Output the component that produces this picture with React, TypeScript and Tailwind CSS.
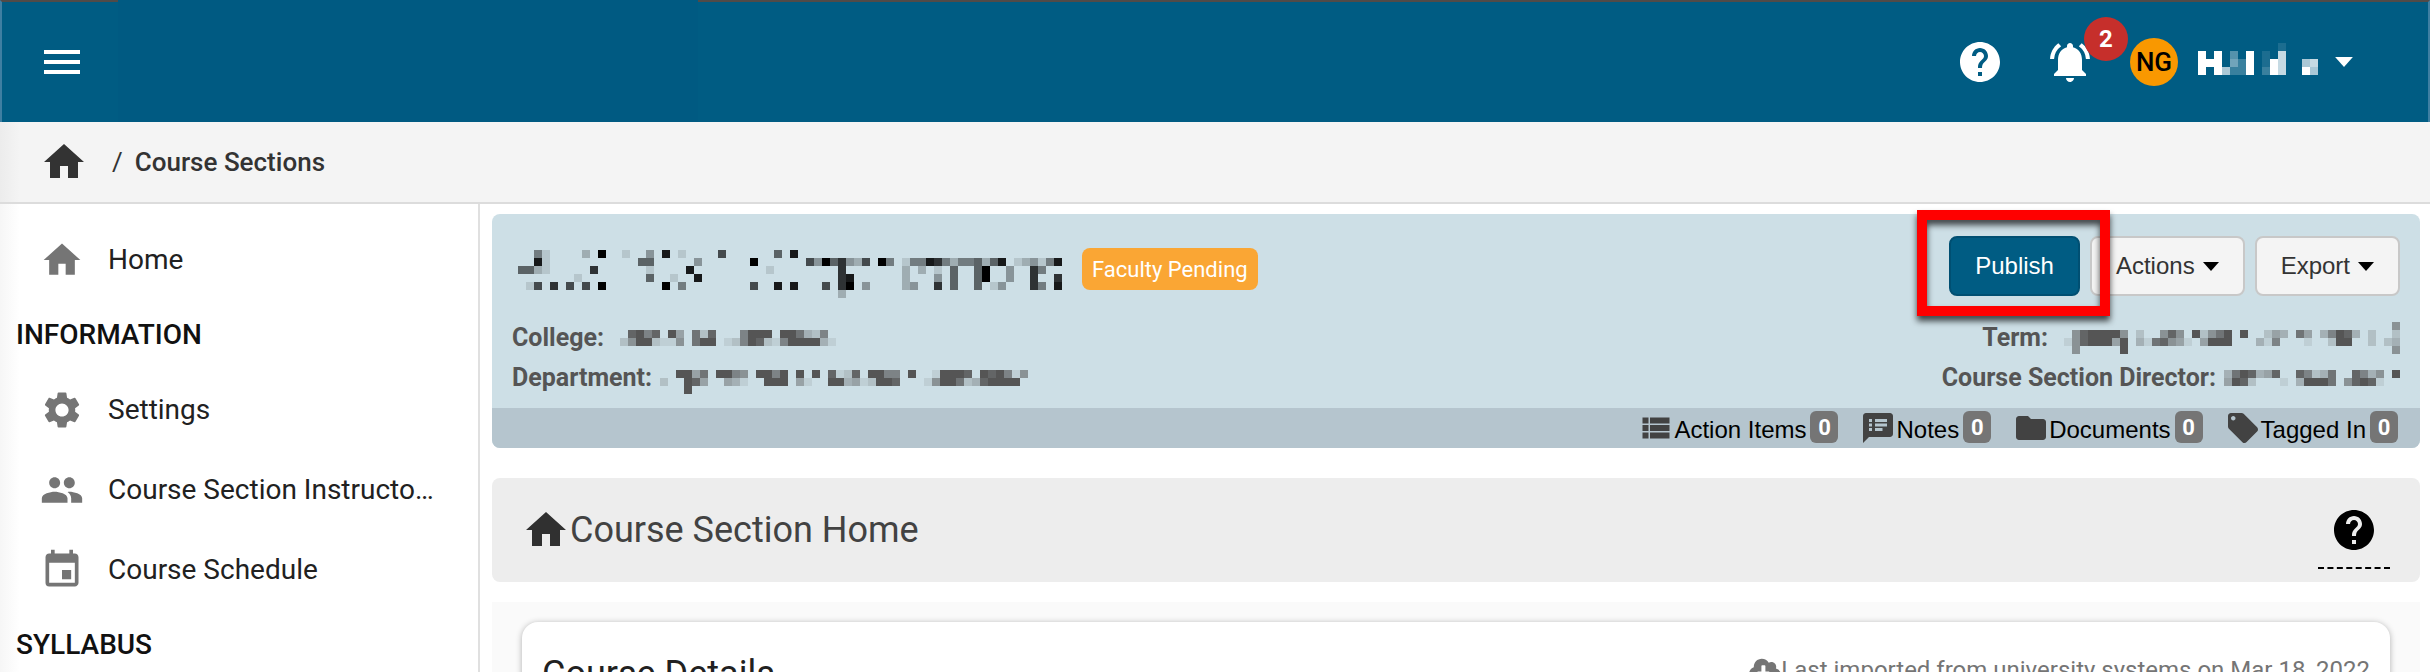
import type { ReactNode } from 'react';
import type { IconType } from 'react-icons';
import { FaCloudDownloadAlt } from 'react-icons/fa';
import {
  MdEvent,
  MdFolder,
  MdHelp,
  MdHome,
  MdLocalOffer,
  MdMenu,
  MdNotificationsActive,
  MdPeople,
  MdSettings,
  MdSpeakerNotes,
  MdViewList,
} from 'react-icons/md';

// Each row lists its filled cells as "column:strength", strength 1-9.
const userName = [
  '10:1',
  '0:9 2:9 4:3 6:9 8:1 10:7',
  '0:9 1:9 2:9 4:4 5:2 6:9 8:1 9:9 10:7 13:6 14:7',
  '0:9 2:9 3:6 4:2 5:2 6:9 8:2 9:9 10:7 13:9 14:6',
];

const courseTitle = [
  '2:4 3:1 8:2 10:9 13:1 16:3 18:8 20:1 25:6 32:5 34:8',
  '2:8 3:1 15:5 16:5 22:3 29:9 36:6 37:3 38:9 39:5 40:7 41:3 42:2 43:6 45:9 46:4 48:1 49:4 50:4 51:8 52:7 53:4 54:2 55:4 56:4 57:5 58:2 59:5 60:8 62:1 63:2 64:3 65:1 66:4 67:8',
  '0:5 1:5 2:2 3:1 9:7 16:1 21:8 31:1 40:7 48:2 50:2 52:1 54:5 57:5 58:9 61:3 64:7 65:4',
  '7:1 16:5 19:1 22:8 40:7 41:8 48:2 52:3 54:5 57:5 58:9 61:3 64:7 67:7',
  '1:1 2:6 4:7 6:6 8:6 10:9 18:9 20:4 29:6 32:8 34:8 38:6 40:7 41:9 43:3 48:2 49:3 52:7 54:5 57:5 59:1 60:3 64:7 65:4 67:8',
  '40:2',
];

const college = [
  '',
  '1:8 2:9 3:6 4:8 6:9 7:4 9:7 10:2 11:8 15:6 16:9 17:9 18:9 20:9 21:9 22:7 23:3 24:2 25:6',
  '0:2 1:5 2:9 3:9 4:2 5:1 6:1 7:5 9:7 10:9 11:9 13:1 14:2 15:6 16:9 17:8 18:2 19:1 20:6 21:9 22:9 23:9 24:9 25:3 26:1',
  '',
];

const department = [
  '',
  '2:9 3:9 4:4 5:7 7:9 8:9 9:6 10:5 12:9 13:9 14:6 15:9 17:9 19:9 21:8 22:1 23:2 24:8 26:9 27:9 28:6 29:6 31:9 34:1 35:9 36:9 37:9 38:8 40:9 41:8 42:9 43:6 44:1 45:5',
  '0:2 3:9 4:8 5:4 8:4 9:3 10:1 13:9 14:9 15:9 17:4 18:1 21:9 22:9 23:3 24:4 25:1 26:2 27:9 28:9 29:8 33:1 34:5 35:9 36:9 37:7 38:2 39:3 40:8 41:9 42:9 43:9 44:9',
  '3:9',
];

const term = [
  '41:5',
  '1:5 2:8 3:9 4:9 5:9 6:9 7:5 9:2 12:5 13:8 14:5 16:9 17:2 18:5 19:7 20:9 22:9 25:2 26:4 27:3 29:7 30:4 32:3 33:6 34:9 35:8 36:3 38:2 41:2',
  '0:1 1:5 2:8 3:9 4:9 5:9 6:4 7:9 9:3 10:1 11:7 12:8 13:5 14:4 15:1 17:4 18:9 19:9 20:9 24:3 25:1 26:6 30:1 33:2 34:9 35:9 38:2 40:2 41:3',
  '1:5 7:9 41:5',
];

const director = [
  '',
  '0:3 1:7 2:9 3:8 4:3 5:4 6:8 9:8 10:6 11:2 12:3 13:7 16:8 17:6 18:3 19:5 21:9',
  '0:4 1:9 2:8 3:2 7:1 9:3 10:9 11:9 12:9 13:7 15:5 16:8 17:9 18:8 19:1',
  '',
];

function Mosaic({ rows, columns, label, className }: { rows: string[]; columns: number; label: string; className: string }) {
  return (
    <svg
      role="img"
      aria-label={label}
      width={columns * 8}
      height={rows.length * 8}
      shapeRendering="crispEdges"
      className={`shrink-0 fill-current ${className}`}
    >
      {rows.map((row, y) =>
        row
          .split(' ')
          .filter(Boolean)
          .map((cell) => {
            const [x, strength] = cell.split(':').map(Number);
            return <rect key={x} x={x * 8} y={y * 8} width={8} height={8} opacity={strength / 9} />;
          })
      )}
    </svg>
  );
}

function Caret({ className }: { className: string }) {
  return (
    <svg viewBox="0 0 16 9" className={`fill-current ${className}`} aria-hidden="true">
      <path d="M0 0h16L8 9z" />
    </svg>
  );
}

function TopBar() {
  return (
    <header className="flex h-[122px] shrink-0 items-center border-x-2 border-t-2 border-x-[#3f7fa2] border-t-[#514b48] bg-[#005c83] pr-[74px] pl-9 text-white">
      <button aria-label="Toggle navigation">
        <MdMenu className="size-12" />
      </button>
      <div className="-mt-[2px] ml-8 w-[580px] self-stretch bg-[#005a82]" />
      <div className="ml-auto flex items-center">
        <button aria-label="Help" className="mr-[42px]">
          <MdHelp className="size-12" />
        </button>
        <button aria-label="Notifications" className="relative mr-9">
          <MdNotificationsActive className="size-12" />
          <span className="absolute -top-[21px] left-[38px] flex size-11 items-center justify-center rounded-full bg-[#c62f2b] text-[24px] font-bold">
            2
          </span>
        </button>
        <button className="flex items-center">
          <span className="flex size-12 items-center justify-center rounded-full bg-[#f99800] text-[26px] font-medium text-black">
            NG
          </span>
          <Mosaic rows={userName} columns={15} label="User name" className="mr-4 mb-1.5 ml-5" />
          <Caret className="h-[10px] w-5" />
        </button>
      </div>
    </header>
  );
}

function Breadcrumbs() {
  return (
    <nav
      aria-label="Breadcrumb"
      className="flex h-[82px] shrink-0 items-center border-b-2 border-[#dcdcdc] bg-[linear-gradient(to_right,#ececec,#f4f4f4_20px)] pl-10 text-[26px] text-[#333]"
    >
      <a href="#" aria-label="Home">
        <MdHome className="size-12" />
      </a>
      <span className="ml-6">/</span>
      <a href="#" className="ml-3 font-medium">
        Course Sections
      </a>
    </nav>
  );
}

function SideLink({ icon: Icon, children }: { icon: IconType; children: ReactNode }) {
  return (
    <a href="#" className="flex h-20 items-center gap-6 pr-10 pl-10">
      <Icon className="size-11 shrink-0 text-[#757575]" />
      <span className="truncate text-[28px] text-[#212121]">{children}</span>
    </a>
  );
}

function SideHeading({ children }: { children: ReactNode }) {
  return <h2 className="flex h-[70px] items-center pl-4 text-[28px] font-medium text-[#111]">{children}</h2>;
}

function Sidebar() {
  return (
    <aside className="w-[480px] shrink-0 border-r-2 border-[#e0e0e0] bg-[linear-gradient(to_right,#f6f6f6,#fff_20px)] pt-4">
      <SideLink icon={MdHome}>Home</SideLink>
      <SideHeading>INFORMATION</SideHeading>
      <SideLink icon={MdSettings}>Settings</SideLink>
      <SideLink icon={MdPeople}>Course Section Instructors</SideLink>
      <SideLink icon={MdEvent}>Course Schedule</SideLink>
      <SideHeading>SYLLABUS</SideHeading>
    </aside>
  );
}

function Detail({ label, children }: { label: string; children: ReactNode }) {
  return (
    <div className="flex h-10 items-center gap-2 pt-1">
      <span className="text-[25px] font-bold">{label}:</span>
      {children}
    </div>
  );
}

function MenuButton({ children }: { children: ReactNode }) {
  return (
    <button className="flex h-[60px] items-center gap-2 rounded-lg border-2 border-[#c8c8c8] bg-[#f4f4f4] px-6 font-['Liberation_Sans',sans-serif] text-[24px] text-[#333]">
      {children}
      <Caret className="h-[9px] w-4 text-black" />
    </button>
  );
}

function SectionHeader() {
  const tabs = [
    { icon: MdViewList, label: 'Action Items', count: 0 },
    { icon: MdSpeakerNotes, label: 'Notes', count: 0 },
    { icon: MdFolder, label: 'Documents', count: 0 },
    { icon: MdLocalOffer, label: 'Tagged In', count: 0 },
  ];

  return (
    <section className="shrink-0 rounded-lg bg-[#cddfe6] text-[#555]">
      <div className="pt-[22px] pr-5 pb-3 pl-5">
        <div className="flex h-[60px] items-start justify-between">
          <div className="flex items-start">
            <Mosaic rows={courseTitle} columns={68} label="Course title" className="mt-3.5 ml-1.5 text-black" />
            <span className="mt-3 ml-5 flex h-[42px] items-center rounded-lg bg-[#faa634] px-2.5 text-[22px] text-white">
              Faculty Pending
            </span>
          </div>
          <div className="flex gap-2.5">
            <div className="relative">
              <button className="h-[60px] rounded-lg border-2 border-[#004f72] bg-[#005c83] px-6 font-['Liberation_Sans',sans-serif] text-[24px] text-white">
                Publish
              </button>
              <span className="pointer-events-none absolute -top-[26px] -right-[30px] -bottom-5 -left-8 z-10 border-10 border-[#ff0000] drop-shadow-[0_5px_3px_rgba(0,0,0,0.7)]" />
            </div>
            <MenuButton>Actions</MenuButton>
            <MenuButton>Export</MenuButton>
          </div>
        </div>
        <div className="mt-5 flex justify-between">
          <div>
            <Detail label="College">
              <Mosaic rows={college} columns={27} label="College name" className="ml-2" />
            </Detail>
            <Detail label="Department">
              <Mosaic rows={department} columns={46} label="Department name" className="" />
            </Detail>
          </div>
          <div className="flex flex-col items-end">
            <Detail label="Term">
              <Mosaic rows={term} columns={42} label="Term name" className="ml-2" />
            </Detail>
            <Detail label="Course Section Director">
              <Mosaic rows={director} columns={22} label="Director name" className="" />
            </Detail>
          </div>
        </div>
      </div>
      <nav
        aria-label="Course section items"
        className="flex h-10 items-center justify-end gap-[22px] rounded-b-lg bg-[#b5c5ce] pr-[22px]"
      >
        {tabs.map((tab) => {
          const Icon = tab.icon;
          return (
            <a key={tab.label} href="#" className="flex items-center font-['Liberation_Sans',sans-serif] text-[24px] text-black">
              <Icon className="size-9 text-[#424242]" />
              <span className="pt-1">{tab.label}</span>
              <span className="mb-0.5 ml-1 flex h-8 w-7 items-center justify-center rounded-md bg-[#757575] font-[Roboto,sans-serif] text-[22px] font-bold text-white">
                {tab.count}
              </span>
            </a>
          );
        })}
      </nav>
    </section>
  );
}

function PageTitle() {
  return (
    <section className="mt-[30px] flex h-[104px] shrink-0 items-start justify-between rounded-lg bg-[#ededed] pr-[30px] pl-[30px]">
      <h1 className="flex h-full items-center text-[36px] text-[#424242]">
        <MdHome className="size-12 text-[#303030]" />
        Course Section Home
      </h1>
      <button aria-label="Page help" className="flex h-[91px] w-[72px] justify-center border-b-2 border-dashed border-black pt-7">
        <MdHelp className="size-12 text-black" />
      </button>
    </section>
  );
}

function CourseDetails() {
  return (
    <section className="mt-5 shrink-0 grow bg-[#fafafa] px-[30px] pt-5">
      <div className="rounded-2xl bg-white px-5 pt-7 pb-10 shadow-[0_1px_6px_rgba(0,0,0,0.3)]">
        <div className="flex items-start justify-between">
          <h2 className="text-[36px] leading-[48px] text-[#212121]">Course Details</h2>
          <p className="flex items-center text-[24px] leading-[40px] text-[#757575]">
            <FaCloudDownloadAlt className="size-8" />
            Last imported from university systems on Mar 18, 2022
          </p>
        </div>
      </div>
    </section>
  );
}

export default function App() {
  return (
    <div className="flex h-screen flex-col overflow-hidden bg-white font-[Roboto,sans-serif]">
      <TopBar />
      <Breadcrumbs />
      <div className="flex min-h-0 grow">
        <Sidebar />
        <main className="flex min-w-0 grow flex-col pt-2.5 pr-2.5 pl-3">
          <SectionHeader />
          <PageTitle />
          <CourseDetails />
        </main>
      </div>
    </div>
  );
}
